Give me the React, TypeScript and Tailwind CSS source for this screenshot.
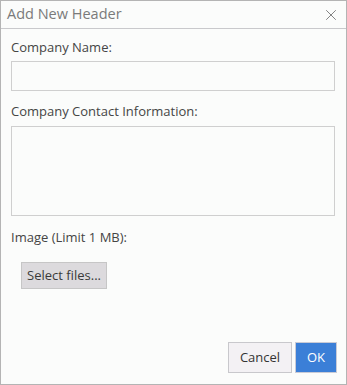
import { X } from "lucide-react";

export default function App() {
  return (
    <div className="w-[347px] h-[385px] bg-[#fbfcfb] border border-[#b4b4b4] flex flex-col font-['Open_Sans',sans-serif]">
      {/* Title bar */}
      <div className="h-[28px] shrink-0 flex items-center justify-between pl-[6px] pr-[6px] border-b border-[#c9c9cc]">
        <span className="text-[14.5px] text-[#7a7a7a] leading-none">Add New Header</span>
        <X className="w-[18px] h-[18px] text-[#808080]" strokeWidth={1.3} />
      </div>

      <div className="flex-1 flex flex-col px-[10px]">
        <label className="mt-[9px] text-[13px] leading-[18px] text-[#454545]">Company Name:</label>
        <input className="mt-[5px] h-[30px] w-[324px] border border-[#cfcfcf] bg-[#fbfcfb] outline-none" />

        <label className="mt-[11px] text-[13px] leading-[18px] text-[#454545]">Company Contact Information:</label>
        <textarea className="mt-[6px] h-[90px] w-[324px] border border-[#cfcfcf] bg-[#fbfcfb] resize-none outline-none" />

        <label className="mt-[12px] text-[13px] leading-[18px] text-[#454545]">Image (Limit 1 MB):</label>
        <div className="mt-[16px] pl-[10px]">
          <button className="h-[27px] w-[86px] bg-[#dcdadd] border border-[#c6c6c6] text-[13px] text-[#3a3a3a]">
            Select files...
          </button>
        </div>

        <div className="mt-auto mb-[11px] flex justify-end gap-[3px] -mr-[1px]">
          <button className="h-[31px] w-[64px] bg-[#f3f1f4] border border-[#c8c8cc] text-[13px] text-[#333]">Cancel</button>
          <button className="h-[31px] w-[42px] bg-[#3b7fd7] border border-[#c9cbd6] text-[13px] text-white">OK</button>
        </div>
      </div>
    </div>
  );
}
